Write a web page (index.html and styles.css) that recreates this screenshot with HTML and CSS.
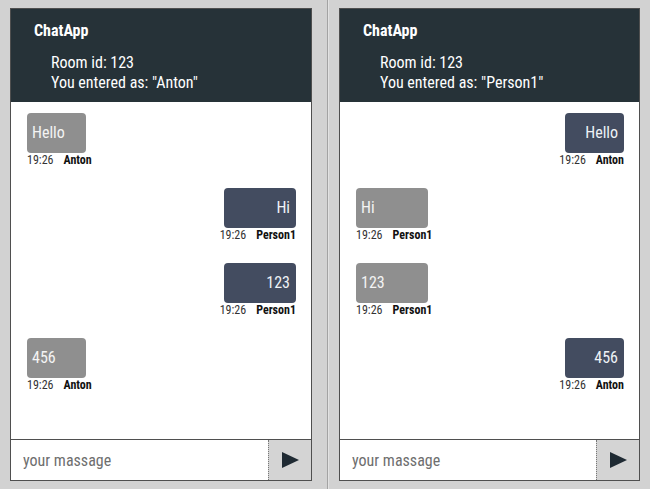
FILE: index.html
```html
<!DOCTYPE html>
<html lang="en">
<head>
<meta charset="utf-8">
<title>ChatApp</title>
<link rel="stylesheet" href="styles.css">
</head>
<body>
<div class="desktop">
  <div class="pane pane--left">
    <section class="chat">
      <header class="chat__header">
        <div class="chat__title">ChatApp</div>
        <div class="chat__info">
          <div>Room id: 123</div>
          <div>You entered as: "Anton"</div>
        </div>
      </header>
      <div class="chat__messages">
        <div class="msg msg--in">
          <div class="bubble bubble--short">Hello</div>
          <div class="meta"><span class="meta__time">19:26</span><span class="meta__name">Anton</span></div>
        </div>
        <div class="msg msg--out">
          <div class="bubble bubble--long">Hi</div>
          <div class="meta"><span class="meta__time">19:26</span><span class="meta__name">Person1</span></div>
        </div>
        <div class="msg msg--out">
          <div class="bubble bubble--long">123</div>
          <div class="meta"><span class="meta__time">19:26</span><span class="meta__name">Person1</span></div>
        </div>
        <div class="msg msg--in">
          <div class="bubble bubble--short">456</div>
          <div class="meta"><span class="meta__time">19:26</span><span class="meta__name">Anton</span></div>
        </div>
      </div>
      <form class="composer">
        <input class="composer__input" type="text" placeholder="your massage">
        <button class="composer__send" type="button" aria-label="Send">
          <svg width="17" height="16" viewBox="0 0 17 16"><path d="M0 0 L17 8 L0 16 Z" fill="#1f2a33"/></svg>
        </button>
      </form>
    </section>
  </div>
  <div class="divider"></div>
  <div class="pane pane--right">
    <section class="chat">
      <header class="chat__header">
        <div class="chat__title">ChatApp</div>
        <div class="chat__info">
          <div>Room id: 123</div>
          <div>You entered as: "Person1"</div>
        </div>
      </header>
      <div class="chat__messages">
        <div class="msg msg--out">
          <div class="bubble bubble--short">Hello</div>
          <div class="meta"><span class="meta__time">19:26</span><span class="meta__name">Anton</span></div>
        </div>
        <div class="msg msg--in">
          <div class="bubble bubble--long">Hi</div>
          <div class="meta"><span class="meta__time">19:26</span><span class="meta__name">Person1</span></div>
        </div>
        <div class="msg msg--in">
          <div class="bubble bubble--long">123</div>
          <div class="meta"><span class="meta__time">19:26</span><span class="meta__name">Person1</span></div>
        </div>
        <div class="msg msg--out">
          <div class="bubble bubble--short">456</div>
          <div class="meta"><span class="meta__time">19:26</span><span class="meta__name">Anton</span></div>
        </div>
      </div>
      <form class="composer">
        <input class="composer__input" type="text" placeholder="your massage">
        <button class="composer__send" type="button" aria-label="Send">
          <svg width="17" height="16" viewBox="0 0 17 16"><path d="M0 0 L17 8 L0 16 Z" fill="#1f2a33"/></svg>
        </button>
      </form>
    </section>
  </div>
</div>
</body>
</html>
```

FILE: styles.css
```css
* { box-sizing: border-box; }

html, body {
  margin: 0;
  padding: 0;
  background: #d2d2d2;
}

body {
  font-family: "Roboto Condensed", Roboto, "Liberation Sans", sans-serif;
  font-stretch: 87%;
}

.desktop {
  display: flex;
  width: 650px;
  height: 489px;
}

.pane {
  display: flex;
  padding: 8px 10px;
}

.pane--left {
  width: 327px;
  padding-right: 15px;
}

.pane--right {
  flex: 1;
}

.divider {
  width: 2px;
  background: linear-gradient(to right, #a3a3a3 0 1px, #e2e2e2 1px 2px);
}

.chat {
  flex: 1;
  display: flex;
  flex-direction: column;
  border: 1px solid #4f4f4f;
  background: #fff;
}

.chat__header {
  background: #263238;
  color: #fff;
  height: 93px;
  padding: 12px 0 0 23px;
}

.chat__title {
  font-weight: 700;
  font-size: 16px;
  line-height: 20px;
}

.chat__info {
  margin-top: 12px;
  padding-left: 17px;
  font-size: 16px;
  line-height: 20px;
}

.chat__messages {
  flex: 1;
  display: flex;
  flex-direction: column;
  gap: 20px;
  padding: 11px 15px 0 16px;
}

.msg {
  display: flex;
  flex-direction: column;
}

.msg--in { align-items: flex-start; }
.msg--out { align-items: flex-end; }

.bubble {
  height: 40px;
  border-radius: 4px;
  padding: 0 6px 0 5px;
  font-size: 16px;
  line-height: 40px;
  white-space: nowrap;
}

.bubble--short { width: 59px; }
.bubble--long { width: 72px; }

.msg--in .bubble {
  background: #8f8f8f;
  color: #f4f4f4;
}

.msg--out .bubble {
  background: #434c60;
  color: #eef2f6;
  text-align: right;
}

.meta {
  display: flex;
  gap: 10px;
  font-size: 12px;
  line-height: 15px;
  white-space: nowrap;
}

.meta__time { color: #333; }
.meta__name { color: #111; font-weight: 700; }

.composer {
  display: flex;
  height: 41px;
  margin: 0;
  border-top: 1px solid #4f4f4f;
}

.composer__input {
  flex: 1;
  min-width: 0;
  border: none;
  outline: none;
  padding: 0 12px;
  font-family: inherit;
  font-stretch: inherit;
  font-size: 16px;
  color: #333;
  background: #fff;
}

.composer__input::placeholder { color: #6e6e6e; }

.composer__send {
  width: 43px;
  border: none;
  border-left: 1px dotted #777;
  background: #d4d4d4;
  display: flex;
  align-items: center;
  justify-content: center;
  padding: 0;
}
```
